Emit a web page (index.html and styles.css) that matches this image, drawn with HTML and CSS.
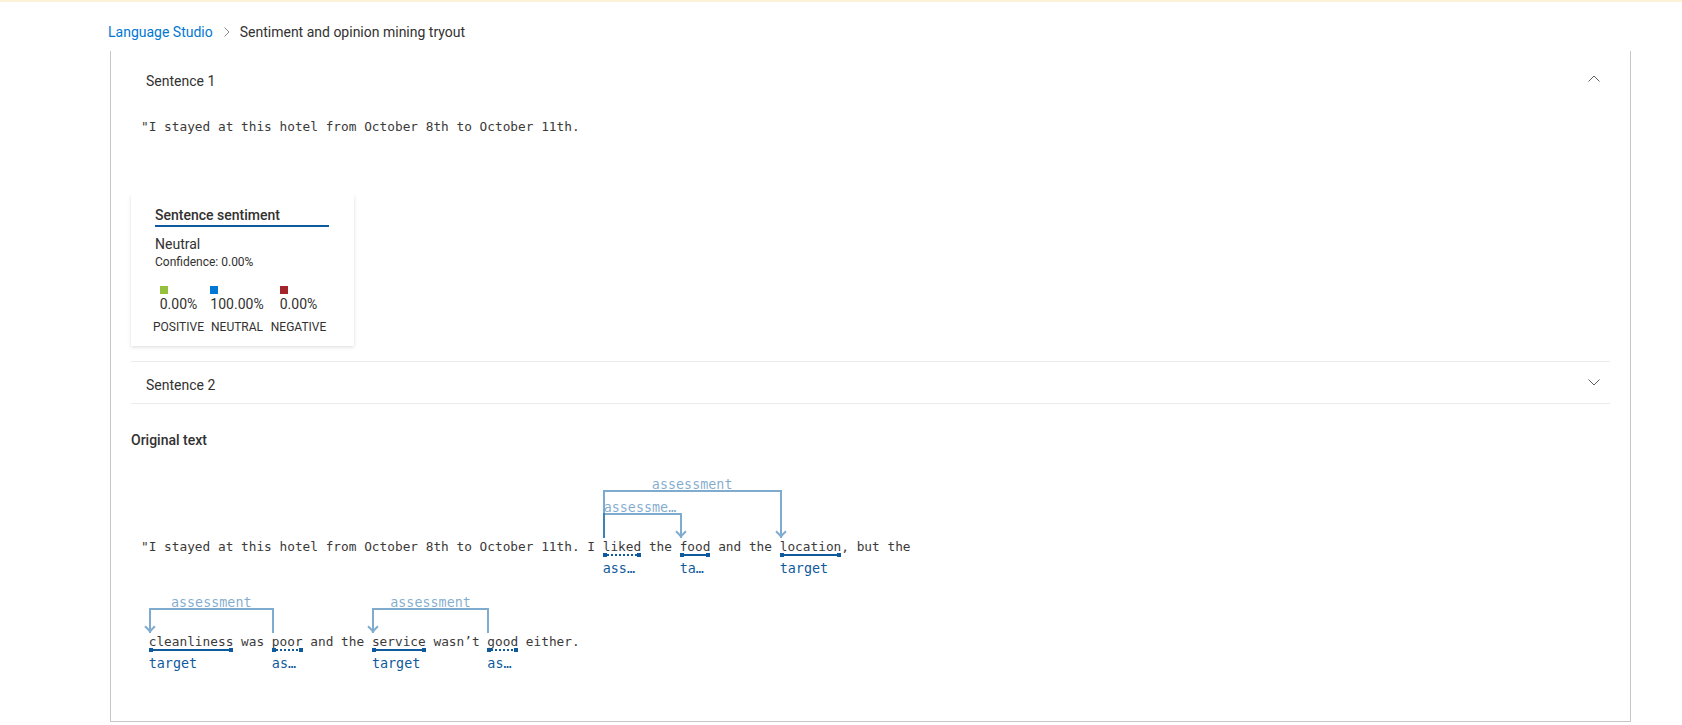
FILE: index.html
```html
<!DOCTYPE html>
<html lang="en">
<head>
<meta charset="utf-8">
<title>Sentiment and opinion mining tryout</title>
<link rel="stylesheet" href="styles.css">
</head>
<body>
<div class="topbar"></div>
<nav class="crumbs">
  <a class="crumb-link">Language Studio</a>
  <svg class="crumb-sep" viewBox="0 0 6 10"><polyline points="0.5,0.5 5,5 0.5,9.5" fill="none" stroke="#8a8886" stroke-width="1"/></svg>
  <span class="crumb-current">Sentiment and opinion mining tryout</span>
</nav>
<section class="panel">
  <div class="acc-item">
    <div class="acc-head">
      <span class="acc-title">Sentence 1</span>
      <svg class="chev" viewBox="0 0 12 7"><polyline points="0.5,6.5 6,1 11.5,6.5" fill="none" stroke="#605e5c" stroke-width="1"/></svg>
    </div>
    <div class="acc-body">
      <p class="mono-line">"I stayed at this hotel from October 8th to October 11th.</p>
      <div class="card">
        <div class="card-title">Sentence sentiment</div>
        <div class="card-sent">Neutral</div>
        <div class="card-conf">Confidence: 0.00%</div>
        <div class="scores">
          <div class="score">
            <div class="score-val"><span class="swatch swatch-pos"></span><span class="pct">0.00%</span></div>
            <span class="score-label">POSITIVE</span>
          </div>
          <div class="score">
            <div class="score-val"><span class="swatch swatch-neu"></span><span class="pct">100.00%</span></div>
            <span class="score-label">NEUTRAL</span>
          </div>
          <div class="score">
            <div class="score-val"><span class="swatch swatch-neg"></span><span class="pct">0.00%</span></div>
            <span class="score-label">NEGATIVE</span>
          </div>
        </div>
      </div>
    </div>
  </div>
  <div class="acc-item">
    <div class="acc-head">
      <span class="acc-title">Sentence 2</span>
      <svg class="chev" viewBox="0 0 12 7"><polyline points="0.5,0.5 6,6 11.5,0.5" fill="none" stroke="#605e5c" stroke-width="1"/></svg>
    </div>
  </div>
  <h3 class="orig-title">Original text</h3>
  <div class="ann">
    <div class="ann-line"><div class="arc arc-l2 arc-liked-location"><span class="arc-label">assessment</span><span class="arrow arrow-r"></span></div><div class="arc arc-l1 arc-liked-food"><span class="arc-label arc-label-trunc">assessme…</span><span class="arrow arrow-r"></span></div>"I stayed at this hotel from October 8th to October 11th. I <span class="tok tok-a">liked<span class="tag">ass…</span></span> the <span class="tok tok-t">food<span class="tag">ta…</span></span> and the <span class="tok tok-t">location<span class="tag">target</span></span>, but the</div>
    <div class="ann-line"><div class="arc arc-l1 arc-poor"><span class="arc-label">assessment</span><span class="arrow arrow-l"></span></div><div class="arc arc-l1 arc-good"><span class="arc-label">assessment</span><span class="arrow arrow-l"></span></div> <span class="tok tok-t">cleanliness<span class="tag">target</span></span> was <span class="tok tok-a">poor<span class="tag">as…</span></span> and the <span class="tok tok-t">service<span class="tag">target</span></span> wasn’t <span class="tok tok-a">good<span class="tag">as…</span></span> either.</div>
  </div>
</section>
</body>
</html>
```
FILE: styles.css
```css
* { box-sizing: border-box; }
html, body { margin: 0; padding: 0; }
body {
  font-family: Roboto, "Noto Sans", "Liberation Sans", sans-serif;
  font-size: 14px;
  color: #323130;
  background: #fff;
  width: 1682px;
  height: 725px;
  overflow: hidden;
}

.topbar { height: 2px; background: #fdf3d6; }

.crumbs {
  display: flex;
  align-items: center;
  height: 20px;
  margin: 20px 0 9px;
  padding-left: 108px;
  line-height: 20px;
}
.crumb-link { color: #0078d4; text-decoration: none; }
.crumb-sep { width: 6px; height: 10px; margin: 0 10px 0 11px; }
.crumb-current { color: #323130; }

.panel {
  margin-left: 110px;
  width: 1521px;
  border: 1px solid #c8c6c4;
  border-top: 0;
  padding: 7px 20px 53px;
}

.acc-item { border-bottom: 1px solid #edebe9; }
.acc-head {
  display: flex;
  align-items: center;
  justify-content: space-between;
  height: 41px;
  padding: 0 10px 0 15px;
}
.acc-title { line-height: 20px; margin-top: 4px; }
.chev { width: 12px; height: 7px; }
.acc-body { padding: 19px 0 15px; }

.mono-line {
  margin: 0;
  padding-left: 10px;
  font-family: "DejaVu Sans Mono", monospace;
  font-size: 12.79px;
  line-height: 18px;
  white-space: pre;
  color: #3b3a39;
}

.card {
  margin-top: 58px;
  width: 223px;
  padding: 12px 25px 11px 24px;
  background: #fff;
  box-shadow: 0 1.6px 3.6px rgba(0,0,0,.13), 0 .3px .9px rgba(0,0,0,.11);
}
.card-title {
  font-weight: 500;
  line-height: 19px;
  border-bottom: 2px solid #0f5a9c;
}
.card-sent { margin-top: 7px; line-height: 20px; }
.card-conf { font-size: 12px; line-height: 16px; }
.scores {
  display: grid;
  grid-template-columns: 47px 50px 53px;
  column-gap: 10px;
  margin-top: 16px;
}
.score { display: flex; flex-direction: column; align-items: center; }
.score-val { display: flex; flex-direction: column; align-items: flex-start; }
.swatch { width: 8px; height: 8px; }
.swatch-pos { background: #95c03c; }
.swatch-neu { background: #0078d4; }
.swatch-neg { background: #a4262c; }
.pct { line-height: 20px; }
.score-label { margin-top: 5px; font-size: 12px; line-height: 16px; white-space: nowrap; }

.orig-title {
  margin: 26px 0 28px;
  font-size: 14px;
  font-weight: 500;
  line-height: 20px;
}

.ann-line {
  position: relative;
  height: 95px;
  padding: 60px 0 0 10px;
  font-family: "DejaVu Sans Mono", monospace;
  font-size: 12.79px;
  line-height: 18px;
  white-space: pre;
  color: #3b3a39;
}

.arc {
  position: absolute;
  border: 2px solid rgba(0, 90, 158, .5);
  border-bottom: 0;
}
.arc-l1 { top: 35px; height: 25px; }
.arc-l2 { top: 12px; height: 48px; }
.arc-liked-location { left: calc(10px + 60ch); width: calc(23ch + 2px); }
.arc-liked-food { left: calc(10px + 60ch); width: calc(10ch + 2px); }
.arc-poor { left: calc(10px + 1ch); width: calc(16ch + 2px); }
.arc-good { left: calc(10px + 30ch); width: calc(15ch + 2px); }

.arc-label {
  position: absolute;
  left: -2px;
  right: -2px;
  bottom: 100%;
  text-align: center;
  font-size: 13.4px;
  line-height: 14px;
  color: rgba(0, 90, 158, .5);
  white-space: nowrap;
}
.arc-label-trunc { text-align: left; padding-left: 1px; }

.arrow {
  position: absolute;
  bottom: 2px;
  width: 8px;
  height: 8px;
  border-right: 2px solid #80adcf;
  border-bottom: 2px solid #80adcf;
  transform: rotate(45deg);
}
.arrow-r { right: -5px; }
.arrow-l { left: -5px; }

.tok { position: relative; display: inline-block; }
.tok::after {
  content: "";
  position: absolute;
  left: 0;
  right: 0;
  top: 15px;
  height: 4px;
}
.tok-t::after {
  background:
    linear-gradient(#0f5a9c, #0f5a9c) left center / 4px 4px no-repeat,
    linear-gradient(#0f5a9c, #0f5a9c) right center / 4px 4px no-repeat,
    linear-gradient(#0f5a9c, #0f5a9c) center / 100% 2px no-repeat;
}
.tok-a::after {
  background:
    linear-gradient(#0f5a9c, #0f5a9c) left center / 4px 4px no-repeat,
    linear-gradient(#0f5a9c, #0f5a9c) right center / 4px 4px no-repeat,
    repeating-linear-gradient(90deg, #0f5a9c 0 2px, transparent 2px 4px) center / 100% 2px no-repeat;
}
.tag {
  position: absolute;
  left: 0;
  top: 23px;
  font-size: 13.4px;
  line-height: 16px;
  color: #0f5a9c;
  white-space: nowrap;
}
```
